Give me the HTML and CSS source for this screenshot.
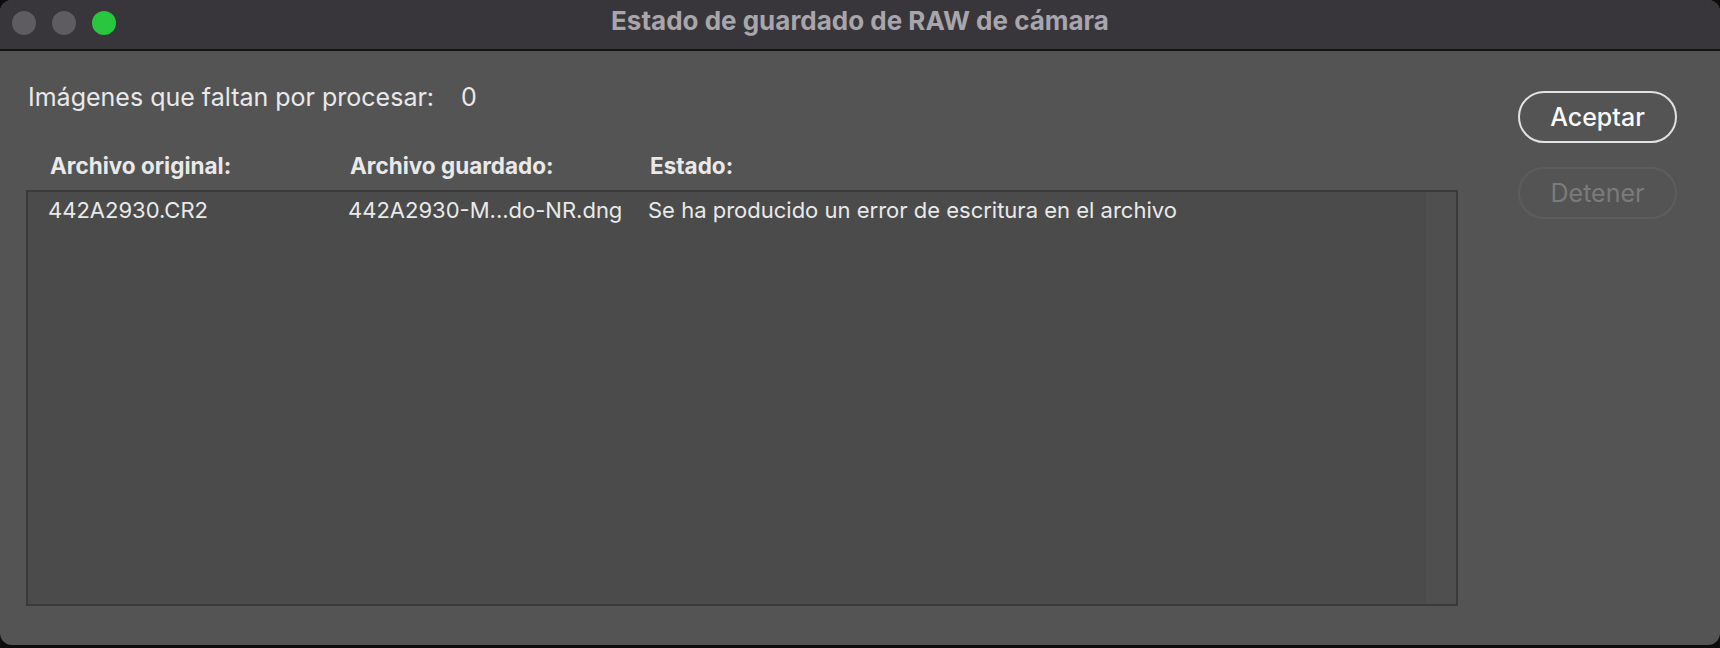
FILE: index.html
```html
<!DOCTYPE html>
<html lang="es">
<head>
  <meta charset="UTF-8" />
  <title>Estado de guardado de RAW de cámara</title>
  <link rel="stylesheet" href="styles.css">
</head>
<body>
  <div class="window">
    <div class="titlebar">
      <div class="lights">
        <span class="light"></span>
        <span class="light"></span>
        <span class="light green"></span>
      </div>
      <div class="title">Estado de guardado de RAW de cámara</div>
    </div>

    <div class="content">
      <div class="main">
        <div class="summary">Imágenes que faltan por procesar:<span class="count">0</span></div>

        <div class="cols head">
          <div>Archivo original:</div>
          <div>Archivo guardado:</div>
          <div>Estado:</div>
        </div>

        <div class="list">
          <div class="rows">
            <div class="cols row">
              <div>442A2930.CR2</div>
              <div>442A2930-M...do-NR.dng</div>
              <div>Se ha producido un error de escritura en el archivo</div>
            </div>
          </div>
          <div class="track"></div>
        </div>
      </div>

      <div class="actions">
        <button class="btn primary">Aceptar</button>
        <button class="btn" disabled>Detener</button>
      </div>
    </div>
  </div>
</body>
</html>
```

FILE: styles.css
```css
body {
  margin: 0;
  background: #0d0d0d;
  font-family: Inter, "Noto Sans", sans-serif;
  color: #e9e9e9;
}
.window {
  height: 645px;
  background: #545454;
  border-radius: 12px;
  overflow: hidden;
  display: flex;
  flex-direction: column;
}
.titlebar {
  height: 49px;
  background: #38363b;
  border-bottom: 2px solid #141414;
  display: grid;
  grid-template-columns: 1fr auto 1fr;
  align-items: center;
}
.lights {
  display: flex;
  gap: 16px;
  padding-left: 12px;
  padding-bottom: 3px;
}
.light {
  width: 24px;
  height: 24px;
  border-radius: 50%;
  background: #5e5c61;
}
.light.green {
  background: #29c73f;
}
.title {
  font-size: 26px;
  font-weight: 700;
  color: #a8a5ac;
  padding-bottom: 8px;
}
.content {
  flex: 1;
  display: flex;
  padding: 0 43px 0 26px;
}
.main {
  flex: 1;
  display: flex;
  flex-direction: column;
}
.summary {
  margin: 32px 0 0 2px;
  font-size: 25px;
  line-height: 28px;
}
.count {
  margin-left: 27px;
}
.cols {
  display: grid;
  grid-template-columns: 300px 300px 1fr;
}
.head {
  margin-top: 42px;
  padding-left: 24px;
  font-size: 22.5px;
  font-weight: 700;
  line-height: 26px;
}
.list {
  margin-top: 11px;
  height: 412px;
  border: 2px solid #3a3a3a;
  background: #4b4b4b;
  display: flex;
}
.rows {
  flex: 1;
}
.row {
  padding: 5px 0 0 20px;
  font-size: 22px;
  line-height: 26px;
}
.track {
  width: 30px;
  background: #4f4f4f;
}
.actions {
  width: 159px;
  margin-left: 60px;
  padding-top: 40px;
  display: flex;
  flex-direction: column;
  gap: 24px;
}
.btn {
  height: 52px;
  border-radius: 26px;
  border: 2px solid #5d5d5d;
  background: none;
  font-family: inherit;
  font-size: 25px;
  color: #7b7b7b;
}
.btn.primary {
  border-color: #e2e2e2;
  color: #fafafa;
  font-weight: 500;
}
```
